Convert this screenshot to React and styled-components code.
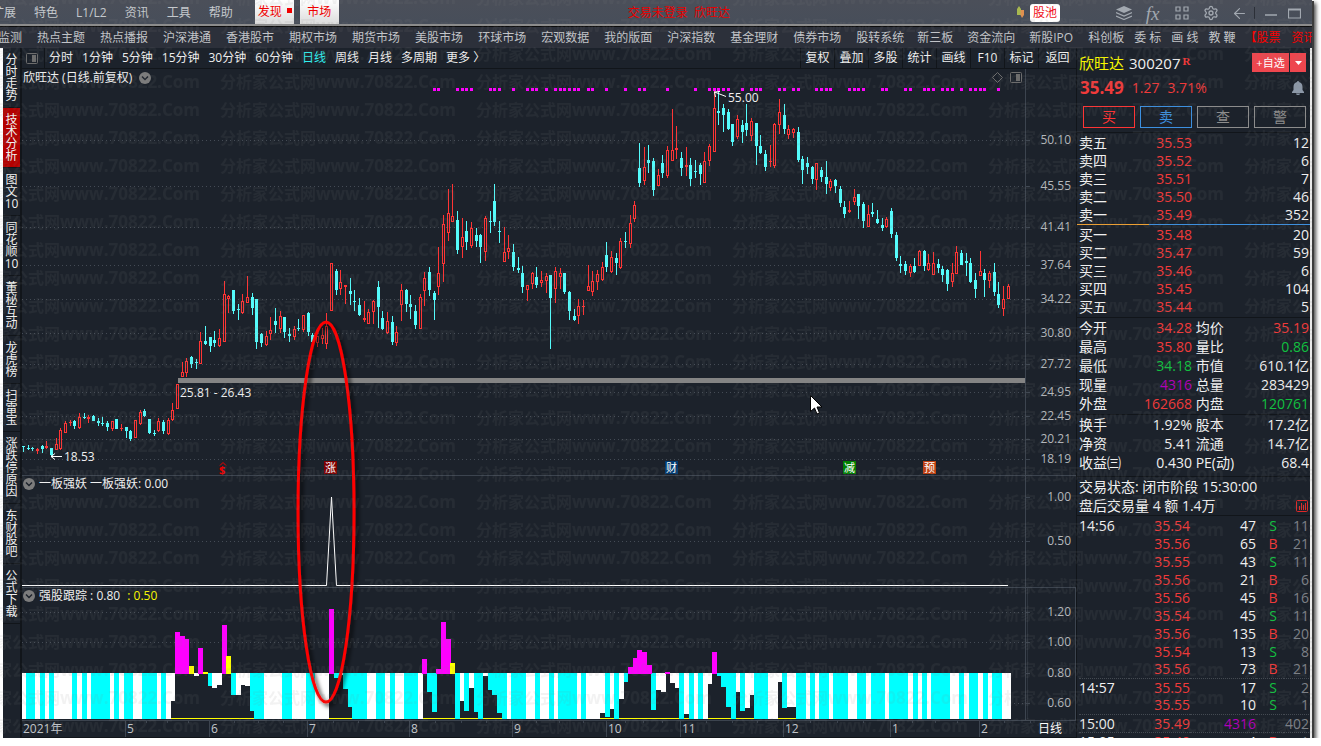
import React from 'react';
import styled, { createGlobalStyle, css } from 'styled-components';
import { Settings, ArrowLeft } from 'lucide-react';

const color = {
    bg: '#1c222b',
    line: '#3c444f',
    dark: '#11151a',
    up: '#ff3434',
    down: '#54fcfc',
    red: '#f03a3a',
    green: '#12c040',
    purple: '#b000b8',
    grey: '#7c8087',
    text: '#f0f0f0',
    axis: '#b4b8bc',
};

const fonts = `"Open Sans", "Noto Sans CJK SC", sans-serif`;

const GlobalStyle = createGlobalStyle`
    * { box-sizing: border-box; }
    body {
        margin: 0;
        background: white;
        overflow: hidden;
        font: 12px/18px ${fonts};
        color: ${color.text};
    }
    button {
        margin: 0;
        padding: 0;
        border: 0;
        background: none;
        color: inherit;
        font: inherit;
        white-space: nowrap;
    }
    a { color: inherit; text-decoration: none; white-space: nowrap; }
    svg { display: block; flex-shrink: 0; }
    table { border-collapse: collapse; width: 100%; table-layout: fixed; }
    th { font-weight: normal; text-align: left; }
    td, th { padding: 0; white-space: nowrap; }
`;

const Window = styled.div`
    position: relative;
    display: flex;
    flex-direction: column;
    width: calc(100vw - 9px);
    height: calc(100vh - 8px);
    background: ${color.bg};
    box-shadow: 2px 1px 0 #3c3c3c, 4px 3px 4px rgba(0, 0, 0, 0.7);
`;

// title bar
const TitleBar = styled.header`
    display: flex;
    height: 27px;
    flex-shrink: 0;
    background: linear-gradient(#4b4f59, #474e5a);
    border-bottom: 1px solid #0c0c0c;
    box-shadow: inset 0 -2px 0 #8c8c8c;
    color: #c4c8cc;
    overflow: hidden;
`;

const Menu = styled.nav`
    display: flex;
    align-items: center;
    gap: 18px;
    margin-left: -8px;
    margin-right: 22px;
`;

const TopTab = styled.button`
    position: relative;
    width: 39px;
    height: 24px;
    margin-right: 6px;
    padding-right: ${props => props.$isNew ? '9px' : '0'};
    background: linear-gradient(#ffffff, #dcdcdc);
    color: #f00000;
`;

const NewDot = styled.i`
    position: absolute;
    top: 8px;
    right: 2px;
    width: 5px;
    height: 5px;
    background: #f00000;
`;

const Title = styled.div`
    flex: 1;
    text-align: center;
    line-height: 26px;
    color: #e80000;
    white-space: pre;
`;

const PoolButton = styled.button`
    width: 30px;
    height: 18px;
    margin: 4px 55px 0 0;
    border-radius: 3px;
    background: white;
    color: #f01020;
`;

const PoolIcon = styled.div`
    padding: 6px 3px 0;
    margin-right: 2px;
`;

const Tools = styled.div`
    display: flex;
    align-items: center;
    height: 26px;
    gap: 12px;
    padding-right: 9px;
    color: #a2a8b0;
`;

const WindowButtons = styled.div`
    display: flex;
    align-items: center;
    gap: 7px;
    margin-left: -6px;
`;

const ToolButton = styled.button`
    display: flex;
    align-items: center;
    justify-content: center;
    width: 17px;
    height: 17px;
    font: italic 19px/17px "Liberation Serif", serif;
`;

const Divider = styled.span`
    width: 1px;
    height: 12px;
    background: #2c3038;
`;

// market links
const Markets = styled.nav`
    display: flex;
    flex-shrink: 0;
    height: 21px;
    line-height: 21px;
    background: #2c303a;
    color: #c2c4c8;
    overflow: hidden;
`;

const MarketGroup = styled.div`
    display: flex;
    gap: ${props => props.$gap}px;
    margin-left: ${props => props.$start}px;
    color: ${props => props.$red ? '#f80000' : 'inherit'};
`;

const Main = styled.main`
    display: flex;
    flex: 1;
    min-height: 0;
    border-left: 3px solid white;
    border-right: 2px solid #e8e8e8;
`;

// left tabs
const Sidebar = styled.nav`
    width: 19px;
    flex-shrink: 0;
    border-right: 2px solid ${color.dark};
`;

const SideTab = styled.button`
    display: block;
    width: 17px;
    padding: 6px 0 5px;
    border-bottom: 1px solid ${color.dark};
    line-height: 12px;
    ${props => props.$active && css`background: #b40000;`}

    span { display: block; text-align: center; height: 12px; }
`;

const ChartArea = styled.section`
    display: flex;
    flex-direction: column;
    flex: 1;
    min-width: 0;
`;

const ChartBar = styled.div`
    display: flex;
    align-items: center;
    height: 21px;
    flex-shrink: 0;
    border-bottom: 1px solid ${color.dark};
`;

const LayoutToggle = styled.button`
    width: 23px;
    height: 20px;
    padding-left: 4px;
    border-right: 1px solid ${color.dark};
`;

const Periods = styled.div`
    display: flex;
    flex: 1;
    gap: 9px;
    padding-left: 4px;
`;

const Period = styled.button`
    color: ${props => props.$active ? '#30f0f0' : 'inherit'};
`;

const BarAction = styled.button`
    min-width: 34px;
    height: 20px;
    padding: 0 4px;
    border-left: 1px solid ${color.dark};
    &:last-child { width: 38px; }
`;

const Panes = styled.div`
    position: relative;
    flex: 1;
    min-height: 0;
`;

const Plot = styled.svg`
    width: 100%;
    height: 100%;
    font: 12px ${fonts};
`;

// caption that floats over a pane
const Caption = styled.div`
    position: absolute;
    top: ${props => props.$top}px;
    left: 1px;
    display: flex;
    align-items: center;
    gap: 4px;
    height: 18px;
    white-space: pre;
`;

const PaneTools = styled.div`
    position: absolute;
    top: 3px;
    right: 54px;
    display: flex;
    gap: 7px;
    align-items: center;
`;

const Round = styled.button`
    display: flex;
    align-items: center;
    justify-content: center;
    width: 12px;
    height: 12px;
    border-radius: 50%;
    background: #7c7c7c;
`;

const Yellow = styled.span`
    color: #f8f800;
`;

// quote panel
const Quote = styled.aside`
    width: 234px;
    flex-shrink: 0;
    border-left: 1px solid ${color.dark};
    font-size: 14px;
    overflow: hidden;
`;

const Heading = styled.div`
    display: flex;
    align-items: center;
    height: 29px;
    padding: 0 4px 0 2px;
    font-size: 15px;
`;

const Code = styled.span`
    flex: 1;
    padding-left: 5px;
    sup {
        color: ${color.red};
        font: bold 11px "Liberation Serif", serif;
        padding-left: 2px;
        vertical-align: 4px;
    }
`;

const AddButton = styled.button`
    height: 19px;
    width: ${props => props.$small ? '16px' : '37px'};
    margin-left: 1px;
    background: #ee464e;
    color: white;
    font: 11px/19px ${fonts};
    svg { margin: 0 auto; }
`;

const Price = styled.div`
    display: flex;
    align-items: center;
    gap: 8px;
    height: 21px;
    padding: 0 6px 0 3px;
    color: ${color.red};
    b { font-size: 17px; }
    svg { margin-left: auto; }
`;

const Trade = styled.div`
    display: flex;
    gap: 5px;
    padding: 8px 4px 4px 6px;
    border-bottom: 1px solid ${color.dark};
`;

const TradeButton = styled.button`
    flex: 1;
    height: 22px;
    border: 1px solid ${props => props.$c};
    color: ${props => props.$c};
    line-height: 18px;
`;

// share of sell orders against buy orders
const Split = styled.div`
    height: 1px;
    margin-top: 1px;
    background: linear-gradient(to right, #f0a030 31%, #3c90e0 31%);
`;

const Block = styled.div`
    padding: 0 1px ${props => props.$bottom || 0}px 2px;
    border-bottom: ${props => props.$open ? '0' : `1px solid ${color.dark}`};
`;

const Row = styled.tr`
    height: ${props => props.$h}px;
    line-height: ${props => props.$h - 1}px;
    ${props => props.$dotted && css`border-top: 1px dotted #444a52;`}
`;

const Num = styled.td`
    text-align: right;
    color: ${props => props.$c || color.text};
`;

const Side = styled.td`
    padding-left: 6px;
    text-align: center;
    color: ${props => props.$sell ? color.green : color.red};
`;

const Status = styled.div`
    display: flex;
    justify-content: space-between;
    align-items: center;
    height: 19px;
    padding-right: 1px;
`;

const Watermark = styled.svg`
    position: absolute;
    inset: 0;
    width: 100%;
    height: 100%;
    pointer-events: none;
`;

const menu = ['扩展', '特色', 'L1/L2', '资讯', '工具', '帮助'];

const markets = ['股票监测', '热点主题', '热点播报', '沪深港通', '香港股市', '期权市场', '期货市场', '美股市场',
    '环球市场', '宏观数据', '我的版面', '沪深指数', '基金理财', '债券市场', '股转系统'];

const sideTabs = ['分 时 走 势', '技 术 分 析', '图 文 10', '同 花 顺 10', '董 秘 互 动', '龙 虎 榜', '扫 雷 宝',
    '涨 跌 停 原 因', '东 财 股 吧', '公 式 下 载'];

const periods = ['分时', '1分钟', '5分钟', '15分钟', '30分钟', '60分钟', '日线', '周线', '月线', '多周期', '更多 〉'];
const actions = ['复权', '叠加', '多股', '统计', '画线', 'F10', '标记', '返回'];

const asks = [['卖五', '35.53', 12], ['卖四', '35.52', 6], ['卖三', '35.51', 7], ['卖二', '35.50', 46], ['卖一', '35.49', 352]];
const bids = [['买一', '35.48', 20], ['买二', '35.47', 59], ['买三', '35.46', 6], ['买四', '35.45', 104], ['买五', '35.44', 5]];

const stats = [
    ['今开', '34.28', color.red, '均价', '35.19', color.red],
    ['最高', '35.80', color.red, '量比', '0.86', color.green],
    ['最低', '34.18', color.green, '市值', '610.1亿'],
    ['现量', '4316', color.purple, '总量', '283429'],
    ['外盘', '162668', color.red, '内盘', '120761', color.green],
];
const finance = [
    ['换手', '1.92%', null, '股本', '17.2亿'],
    ['净资', '5.41', null, '流通', '14.7亿'],
    ['收益㈢', '0.430', null, 'PE(动)', '68.4'],
];

const ticks = [
    ['14:56', '35.54', 47, 'S', 11],
    ['', '35.56', 65, 'B', 21],
    ['', '35.55', 43, 'S', 11],
    ['', '35.56', 21, 'B', 6],
    ['', '35.56', 45, 'B', 16],
    ['', '35.54', 45, 'S', 11],
    ['', '35.56', 135, 'B', 20],
    ['', '35.54', 13, 'S', 8],
    ['', '35.56', 73, 'B', 21],
    ['14:57', '35.55', 17, 'S', 2],
    ['', '35.55', 10, 'S', 1],
    ['15:00', '35.49', 4316, '', 402],
    ['15:05', '35.49', 4, 'B', 1],
];

// u = up, d = down, then high, body top, body bottom, low
const candles = `
d446,446,447,452 d445,448,449,450 d447,448,449,451 u448,449,451,454 d445,446,449,453 u441,446,448,449
d448,448,455,456 u438,444,450,450 u428,430,449,450 u421,423,433,433 u420,422,423,426 d420,421,426,429
u413,417,428,429 d413,417,418,419 u415,417,419,423 d415,416,421,421 d418,421,423,426 d417,423,424,426
d421,423,427,431 u421,421,429,431 d419,419,429,429 u424,428,429,431 d427,427,431,438 d430,431,439,441
u420,420,438,438 u410,412,424,425 d409,411,416,417 d419,419,433,434 d430,433,434,436 u418,421,431,432
d420,422,431,434 u418,420,434,435 u403,410,420,421 u384,384,409,409
u362,372,377,377 u358,361,373,377 d356,357,364,368 d359,362,363,369 u332,341,364,364 d326,341,344,345
d337,337,346,352 d331,340,343,347 u329,338,346,347 u281,294,342,342 u295,296,299,313 d290,290,311,314
d304,309,310,320 u294,301,313,314 u276,297,303,303 d293,297,308,315 d299,299,342,349 d333,334,343,347
u331,336,345,346 u317,330,334,340 d308,321,325,333 u311,316,329,333 d317,317,332,338 d328,334,336,342
u326,329,337,340 d319,328,329,331 u315,315,330,332 d312,313,332,336 d333,335,342,342 u336,336,343,347
u328,335,339,344 u313,326,344,349 u263,263,311,311 d269,271,290,295 u270,282,289,295 u285,285,287,304
d278,291,294,305 d290,301,302,311 d298,305,315,316 u301,318,320,322 u309,312,324,324 u300,301,312,324
d281,287,307,328 d311,318,329,330 u312,321,333,334 d316,322,342,345 u326,332,343,346 u284,290,305,321
d289,290,304,312 d295,304,307,319 d305,311,325,329 u294,297,329,329 u272,278,291,306 d267,272,290,296
d291,293,300,320 u247,273,287,295
u215,224,264,282 u189,213,233,241 u184,216,222,222 d211,220,250,254 u218,237,247,258 d221,231,242,250
u222,228,246,248 d228,235,241,247 d234,235,247,263 u216,218,252,261 d211,221,222,233 d184,201,222,226
d221,231,232,243 u227,252,262,262 u235,248,252,259 d244,252,267,271 d257,268,270,273 d266,273,287,293
u285,285,290,301 u272,273,284,289 d267,277,285,288 u271,280,283,287 u273,276,281,293 d275,275,298,349
u267,271,289,303 u268,273,277,289 d273,273,292,294 d291,292,311,320 d309,316,320,321 u299,306,316,324
u300,306,307,315 u265,286,291,291 u271,281,292,296 u270,274,282,290 u262,267,280,281 d242,255,267,272
u251,257,272,273 d253,258,263,275 u238,241,268,269 d232,241,242,248 u215,223,244,248 u201,205,219,222
d143,168,183,187 u147,167,181,185 d145,160,163,173 d158,161,190,196 u169,175,186,186 d155,163,173,178
u146,150,176,178 u109,150,161,161 u126,148,150,159 d152,158,168,176 u147,165,167,176 d158,165,179,186
d160,171,172,178 d163,165,174,185 u152,161,183,183 u144,146,161,166 u91,108,152,152 d91,111,113,125
d104,108,115,132 d109,112,129,130 d124,124,142,146 u115,119,137,139 d120,125,132,143 d104,123,130,136
u118,121,136,141 d123,123,146,165 d135,146,153,154 d150,154,167,171 u145,161,162,167 u123,124,166,168
u99,112,125,134 d104,115,129,134 u125,129,135,139 u128,129,133,138 d127,132,160,162 d156,159,170,184
d157,163,167,174 d166,167,179,184 u163,163,180,190 d167,170,177,182 d161,177,184,194 u179,181,188,191
d179,180,186,193 d186,189,203,207 d201,207,214,218 u201,210,212,213 u189,197,202,205 d194,194,206,219
d202,204,221,228 u205,214,227,227 d203,212,214,217 d210,219,223,224
d218,225,228,231 u217,219,227,228 d208,211,234,238 d232,235,258,261 d256,264,266,273 d261,264,271,275
u264,266,273,277 d258,266,272,273 u250,251,266,266 d250,251,266,271 u254,263,270,271 u252,263,275,275
d259,264,268,273 d266,269,275,282 d269,270,284,291 u263,273,282,287 u246,252,274,274 d250,253,265,265
d253,261,263,276 d258,263,282,283 d273,280,289,298 u251,271,276,276 d269,273,280,297 u271,273,281,288
d263,272,292,296 d282,294,305,308 u286,299,309,316 u284,286,299,299
`.trim().split(/\s+/).map(s => ({ up: s[0] === 'u', v: s.slice(1).split(',').map(Number) }));

const candleX = i => Math.round(23 + i * 14 / 3);

// days that carry a marker above the chart
const marked = [88, 89, 93, 94, 95, 96, 100, 101, 102, 105, 108, 109, 110, 112, 114, 115, 116, 117, 118, 119, 121, 122,
    125, 129, 132, 133, 138, 144, 147, 148, 149, 150, 151, 154, 156, 157, 158, 162, 163, 165, 166, 170, 171, 172, 173,
    177, 178, 179, 180, 184, 185, 189, 190, 193, 194, 195, 197, 198, 199, 201, 203, 204, 205, 206, 209];

const priceAxis = [[140, '50.10'], [186, '45.55'], [227, '41.41'], [265, '37.64'], [299, '34.22'], [333, '30.80'],
    [364, '27.72'], [392, '24.95'], [416, '22.45'], [439, '20.21'], [459, '18.19']];
const signalAxis = [[497, '1.00'], [541, '0.50']];
const trendAxis = [[612, '1.20'], [642, '1.00'], [673, '0.80'], [703, '0.60']];

const months = [[125, '5'], [209, '6'], [307, '7'], [409, '8'], [512, '9'], [606, '10'], [680, '11'], [783, '12'], [890, '1'], [979, '2']];

// full height cyan stripes: from, to
const stripes = [[26, 35], [40, 45], [49, 54], [72, 77], [82, 87], [91, 110], [114, 119], [124, 133], [142, 157],
    [161, 166], [254, 264], [282, 292], [306, 315], [352, 367], [376, 385], [390, 395], [404, 418], [455, 460],
    [478, 483], [502, 507], [511, 526], [535, 540], [549, 554], [558, 577], [581, 586], [614, 619], [679, 684],
    [689, 694], [698, 703], [731, 736], [754, 768], [796, 806], [810, 815], [819, 829], [833, 848], [857, 866],
    [871, 885], [889, 908], [913, 918], [922, 927], [931, 950], [959, 964], [969, 978], [983, 988], [992, 1002]];

const gaps = [[171, 254], [329, 352], [423, 455], [460, 478], [483, 502], [600, 614], [619, 679], [684, 689],
    [708, 731], [736, 754], [778, 796]];

// short bars hanging from the 0.80 line: from, to, bottom, cyan?
const hanging = [[171, 175, 701], [194, 199, 676], [208, 213, 686, 1], [212, 217, 688], [217, 222, 685],
    [231, 236, 695, 1], [236, 241, 695], [241, 245, 685], [245, 250, 686], [250, 254, 711, 1], [334, 339, 678, 1],
    [339, 343, 675], [343, 348, 689, 1], [348, 352, 707, 1], [427, 432, 692, 1], [432, 437, 712, 1], [460, 464, 701],
    [464, 469, 711, 1], [469, 474, 688], [474, 478, 712, 1], [483, 488, 676], [488, 492, 690, 1], [492, 497, 695, 1],
    [497, 502, 713, 1], [600, 605, 713], [605, 610, 717, 1], [610, 614, 709], [619, 624, 699], [624, 628, 682, 1],
    [651, 656, 710, 1], [656, 661, 690], [661, 666, 692], [670, 675, 683], [675, 679, 688], [684, 689, 714],
    [708, 712, 684], [717, 721, 676, 1], [721, 726, 687, 1], [726, 731, 707, 1], [736, 740, 692], [740, 745, 711, 1],
    [745, 750, 708], [750, 754, 695], [778, 782, 682], [782, 787, 708, 1], [787, 796, 707]];

// bars rising above it: from, to, top, yellow?
const rising = [[175, 180, 632], [180, 185, 636], [185, 189, 639], [189, 194, 666, 1], [198, 203, 648],
    [203, 208, 672, 1], [222, 227, 625], [226, 231, 656, 1], [329, 334, 609], [422, 427, 659], [436, 441, 669],
    [441, 446, 622], [446, 451, 639], [450, 455, 663, 1], [628, 633, 667], [633, 637, 658], [637, 642, 650],
    [642, 647, 652], [647, 652, 665], [665, 670, 672], [712, 717, 652]];

const events = [[324, '涨', '#800000'], [665, '财', '#003a70'], [843, '减', '#008000'], [923, '预', '#c04010']];

const PanelIcon = () => (
    <svg width="12" height="11" viewBox="0 0 12 11">
        <rect x="0.5" y="0.5" width="11" height="10" rx="1" fill="none" stroke="#6c6c6c"/>
        <rect x="6" y="2" width="4" height="7" fill="#6c6c6c"/>
    </svg>
);

const Chevron = () => (
    <Round aria-label="展开">
        <svg width="8" height="6" viewBox="0 0 8 6"><path d="M1 1.5 4 4.5 7 1.5" fill="none" stroke="#1c222b" strokeWidth="1.4"/></svg>
    </Round>
);

const Axis = ({ items }) => items.map(([y, label]) => (
    <g key={label}>
        <path d={`M1026 ${y + 0.5}h4`} stroke={color.line}/>
        <text x="1071" y={y + 4} textAnchor="end" fill={color.axis}>{label}</text>
    </g>
));

const Grid = ({ rows }) => rows.map(y => (
    <path key={y} d={`M22 ${y + 0.5}H1025`} stroke="#444b55" strokeDasharray="1 3"/>
));

const Candle = ({ x, up, v: [high, top, bottom, low] }) => {
    const fill = up ? color.up : color.down;
    const hollow = up && bottom - top > 2;
    return (
        <g>
            <rect x={x} y={high} width="1" height={low - high} fill={fill}/>
            <rect x={x - 1} y={top} width="3" height={Math.max(bottom - top, 1)} fill={fill}/>
            {hollow && <rect x={x} y={top + 1} width="1" height={bottom - top - 2} fill={color.bg}/>}
        </g>
    );
};

const TrendBars = () => (
    <g>
        <rect x="22" y="673" width="989" height="46" fill="#fff"/>
        {stripes.map(([a, b]) => <rect key={a} x={a} y="673" width={b - a} height="46" fill="#0ff"/>)}
        {gaps.map(([a, b]) => (
            <g key={a}>
                <rect x={a} y="673" width={b - a} height="45" fill={color.bg}/>
                <rect x={a} y="718" width={b - a} height="1" fill="#ff0"/>
            </g>
        ))}
        {hanging.map(([a, b, y, cyan]) => <rect key={a} x={a} y="673" width={b - a} height={y - 673} fill={cyan ? '#0ff' : '#fff'}/>)}
        {rising.map(([a, b, y, yellow]) => <rect key={a} x={a} y={y} width={b - a} height={674 - y} fill={yellow ? '#ff0' : '#f0f'}/>)}
    </g>
);

const Chart = () => (
    <Plot viewBox="22 69 1054 669" preserveAspectRatio="none">
        <defs>
            <filter id="soft" x="-20%" y="-5%" width="150%" height="110%">
                <feDropShadow dx="3" dy="3" stdDeviation="2" floodColor="#000" floodOpacity="0.8"/>
            </filter>
        </defs>
        <Grid rows={[140, 186, 227, 265, 299, 333, 364, 392, 416, 439, 459, 541, 612, 642, 703]}/>
        <g shapeRendering="crispEdges">
            <path d="M1025.5 69V720M22 475.5H1076M22 587.5H1076M22 720.5H1076M1075.5 588V720" fill="none" stroke={color.line}/>
            <path d="M1027.5 588V719" stroke="#2c333d"/>
            <path d="M22 737.5H1076" stroke={color.dark}/>
            {marked.map(i => <rect key={i} x={candleX(i) - 1} y="88" width="3" height="3" fill="#f0f"/>)}
            {candles.map((c, i) => <Candle key={i} x={candleX(i)} {...c}/>)}
            <rect x="178" y="378" width="847" height="5" fill="#848484"/>
            <TrendBars/>
        </g>
        <Axis items={priceAxis}/>
        <Axis items={signalAxis}/>
        <Axis items={trendAxis}/>

        <g fill={color.text}>
            <text x="180" y="397">25.81 - 26.43</text>
            <text x="64" y="461">18.53</text>
            <text x="728" y="102">55.00</text>
            <path d="M62 456.5H51M55 453.5l-4 3 4 3M726 96.5 714.5 92M720 91.5l-5.500.5 1 5" fill="none" stroke="#fff"/>
        </g>
        <path d="M22 585.5H326.500L331.500 497 336.500 585.500H1008" fill="none" stroke="#fff"/>

        <text x="219" y="474" fill="#f00000" fontWeight="bold" fontSize="11">$</text>
        <path d="M220 465.500l3-3 3 3" fill="none" stroke="#f00000"/>
        {events.map(([x, label, fill]) => (
            <g key={x}>
                <rect x={x} y="461" width="13" height="13" fill={fill}/>
                <text x={x + 1} y="472" fontSize="11" fill="#fff">{label}</text>
            </g>
        ))}

        <g fill="#c4c8cc">
            <text x="23" y="733">2021年</text>
            {months.map(([x, m], i) => {
                const next = months[i + 1] ? months[i + 1][0] : 1080;
                const step = (next - x) / 4;
                return (
                    <g key={x}>
                        <path d={`M${x + 0.5} 721v16`} stroke={color.line}/>
                        <path d={[1, 2, 3].map(n => `M${Math.round(x + step * n) + 0.5} 721v2`).join('')} stroke={color.line}/>
                        <text x={x + 2} y="733">{m}</text>
                    </g>
                );
            })}
        </g>
        <text x="1038" y="733" fill="#fff">日线</text>

        <ellipse cx="326" cy="512" rx="28" ry="190" fill="none" stroke="#ff0000" strokeWidth="3" filter="url(#soft)"/>
        <path d="M810.500 395.500v16l4-3.500 2.500 6 2.500-1-2.500-6h5z" fill="#fff" stroke="#000"/>
    </Plot>
);

const Book = ({ rows }) => (
    <table>
        <colgroup><col width="50"/><col width="63"/><col/></colgroup>
        <tbody>
            {rows.map(([name, price, volume]) => (
                <Row key={name} $h={18}>
                    <th scope="row">{name}</th>
                    <Num $c={color.red}>{price}</Num>
                    <Num>{volume}</Num>
                </Row>
            ))}
        </tbody>
    </table>
);

const Figures = ({ rows }) => (
    <table>
        <colgroup><col width="50"/><col width="63"/><col width="54"/><col/></colgroup>
        <tbody>
            {rows.map(([a, x, xc, b, y, yc]) => (
                <Row key={a} $h={19}>
                    <th scope="row">{a}</th>
                    <Num $c={xc}>{x}</Num>
                    <th scope="row">&nbsp;{b}</th>
                    <Num $c={yc}>{y}</Num>
                </Row>
            ))}
        </tbody>
    </table>
);

const Ticks = () => (
    <table>
        <colgroup><col width="50"/><col width="61"/><col width="66"/><col width="28"/><col/></colgroup>
        <tbody>
            {ticks.map(([time, price, volume, side, count], i) => (
                <Row key={i} $h={18} $dotted={i > 0 && time !== ''}>
                    <th scope="row">{time}</th>
                    <Num $c={color.red}>{price}</Num>
                    <Num $c={volume > 1000 ? color.purple : null}>{volume}</Num>
                    <Side $sell={side === 'S'}>{side}</Side>
                    <Num $c={color.grey}>{count}</Num>
                </Row>
            ))}
        </tbody>
    </table>
);

const TopIcons = () => (
    <Tools>
        <ToolButton aria-label="图层">
            <svg width="16" height="14" viewBox="0 0 16 14" fill="currentColor">
                <path d="M8 0 16 3.500 8 7 0 3.500z"/>
                <path d="M0 6.500 8 10l8-3.500M0 10 8 13.500 16 10" fill="none" stroke="currentColor" strokeWidth="1.200"/>
            </svg>
        </ToolButton>
        <ToolButton>fx</ToolButton>
        <ToolButton aria-label="布局">
            <svg width="14" height="14" viewBox="0 0 14 14" fill="none" stroke="currentColor" strokeWidth="1.200">
                <path d="M1 1h4v4H1zM9 1h4v4H9zM1 9h4v4H1zM9 9h4v4H9z"/>
            </svg>
        </ToolButton>
        <ToolButton aria-label="设置"><Settings size={16} strokeWidth={2}/></ToolButton>
        <ToolButton aria-label="返回"><ArrowLeft size={17} strokeWidth={1.6}/></ToolButton>
        <WindowButtons>
            <Divider/>
            <ToolButton aria-label="最小化">
                <svg width="12" height="12" viewBox="0 0 12 12"><path d="M0 8h12" stroke="currentColor" strokeWidth="1.500"/></svg>
            </ToolButton>
            <ToolButton aria-label="最大化">
                <svg width="13" height="11" viewBox="0 0 13 11"><path d="M.5 1h12v9H.5zM.5 2h12" fill="none" stroke="currentColor" strokeWidth="1.200"/></svg>
            </ToolButton>
        </WindowButtons>
    </Tools>
);

const App = () => (
    <Window>
        <GlobalStyle/>
        <TitleBar>
            <Menu>{menu.map(m => <button key={m}>{m}</button>)}</Menu>
            <TopTab $isNew>发现<NewDot/></TopTab>
            <TopTab>市场</TopTab>
            <Title>交易未登录  欣旺达</Title>
            <PoolIcon>
                <svg width="9" height="13" viewBox="0 0 9 13">
                    <path d="M3 0 5 3v6H1V3z" fill="#a8b850"/>
                    <path d="M6 12 8 9V4H4.500v5z" fill="#e09050"/>
                </svg>
            </PoolIcon>
            <PoolButton>股池</PoolButton>
            <TopIcons/>
        </TitleBar>

        <Markets>
            <MarketGroup $start={-26} $gap={15}>{markets.map(m => <a href="#" key={m}>{m}</a>)}</MarketGroup>
            <MarketGroup $start={13} $gap={14}>{['新三板', '资金流向', '新股IPO'].map(m => <a href="#" key={m}>{m}</a>)}</MarketGroup>
            <MarketGroup $start={15} $gap={10}>{['科创板', '委 标', '画 线', '教 鞭'].map(m => <a href="#" key={m}>{m}</a>)}</MarketGroup>
            <MarketGroup $start={9} $gap={11} $red>{['【股票', '资讯】'].map(m => <a href="#" key={m}>{m}</a>)}</MarketGroup>
        </Markets>

        <Main>
            <Sidebar>
                {sideTabs.map((tab, i) => (
                    <SideTab key={tab} $active={i === 1}>
                        {tab.split(' ').map(c => <span key={c}>{c}</span>)}
                    </SideTab>
                ))}
            </Sidebar>

            <ChartArea>
                <ChartBar>
                    <LayoutToggle aria-label="侧栏"><PanelIcon/></LayoutToggle>
                    <Periods>{periods.map(p => <Period key={p} $active={p === '日线'}>{p}</Period>)}</Periods>
                    {actions.map(a => <BarAction key={a}>{a}</BarAction>)}
                </ChartBar>
                <Panes>
                    <Chart/>
                    <Caption $top={0}>欣旺达 (日线.前复权) <Chevron/></Caption>
                    <PaneTools>
                        <svg width="11" height="11" viewBox="0 0 11 11"><path d="M5.500.5l5 5-5 5-5-5z" fill="none" stroke="#6c6c6c"/></svg>
                        <PanelIcon/>
                    </PaneTools>
                    <Caption $top={406}><Chevron/>一板强妖 一板强妖: 0.00</Caption>
                    <Caption $top={518}><Chevron/>强股跟踪 : 0.80 <Yellow>: 0.50</Yellow></Caption>
                </Panes>
            </ChartArea>

            <Quote>
                <Heading>
                    <Yellow>欣旺达</Yellow>
                    <Code>300207<sup>R</sup></Code>
                    <AddButton>+自选</AddButton>
                    <AddButton $small aria-label="更多自选">
                        <svg width="7" height="4" viewBox="0 0 7 4"><path d="M0 0h7L3.500 4z" fill="#fff"/></svg>
                    </AddButton>
                </Heading>
                <Price>
                    <b>35.49</b><span>1.27</span><span>3.71%</span>
                    <svg width="12" height="14" viewBox="0 0 12 14"><path d="M6 0a1 1 0 0 1 1 1c2.500.6 3.500 2.500 3.500 5v3L12 11v1H0v-1l1.500-2V6C1.500 3.500 2.500 1.600 5 1a1 1 0 0 1 1-1zM4 12.500h4a2 1.500 0 0 1-4 0z" fill="#8c98a8"/></svg>
                </Price>
                <Trade>
                    <TradeButton $c={color.up}>买</TradeButton>
                    <TradeButton $c="#3c90e0">卖</TradeButton>
                    <TradeButton $c="#8c8c8c">查</TradeButton>
                    <TradeButton $c="#8c8c8c">警</TradeButton>
                </Trade>
                <Block $open><Book rows={asks}/></Block>
                <Split/>
                <Block $bottom={2}><Book rows={bids}/></Block>
                <Block $bottom={1}><Figures rows={stats}/></Block>
                <Block $bottom={4}><Figures rows={finance}/></Block>
                <Block>
                    <Status>交易状态: 闭市阶段 15:30:00</Status>
                    <Status>
                        盘后交易量 4 额 1.4万
                        <svg width="12" height="12" viewBox="0 0 12 12" fill="none" stroke="#e02828">
                            <rect x="0.5" y="0.5" width="11" height="11" rx="1"/>
                            <path d="M3.500 10V6M5.500 10V3M7.500 10V5M9.500 10V3"/>
                        </svg>
                    </Status>
                </Block>
                <Block><Ticks/></Block>
            </Quote>
        </Main>

        <Watermark aria-hidden="true">
            <defs>
                <pattern id="mark" x="220" y="12" width="256" height="28" patternUnits="userSpaceOnUse">
                    <text x="0" y="20" fontSize="16" fontWeight="bold" fill="#808080" fillOpacity="0.1">
                        分析家公式网<tspan fontSize="17">www.70822.Com</tspan>
                    </text>
                </pattern>
            </defs>
            <rect width="100%" height="100%" fill="url(#mark)"/>
        </Watermark>
    </Window>
);

export default App;
